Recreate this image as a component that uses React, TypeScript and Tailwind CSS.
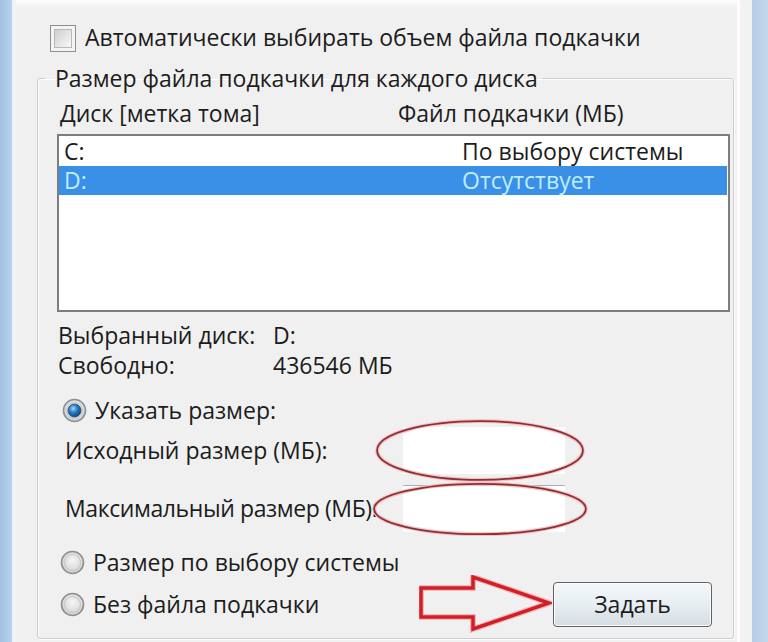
import React from 'react';

const font = "font-['Open_Sans',sans-serif] text-[23px] leading-none text-[#1c1c1c]";

const Radio: React.FC<{ checked?: boolean }> = ({ checked }) => (
    <svg width="25" height="25" viewBox="0 0 25 25" className="shrink-0">
        <defs>
            <radialGradient id="ring" cx="50%" cy="40%" r="60%">
                <stop offset="0%" stopColor="#f6f6f6" />
                <stop offset="100%" stopColor="#cfcfcf" />
            </radialGradient>
            <radialGradient id="dot" cx="40%" cy="35%" r="70%">
                <stop offset="0%" stopColor="#9fdcff" />
                <stop offset="45%" stopColor="#2a7cc4" />
                <stop offset="100%" stopColor="#0b3f73" />
            </radialGradient>
        </defs>
        <circle cx="12.5" cy="12.5" r="11" fill="url(#ring)" stroke="#8d8f91" strokeWidth="1.6" />
        <circle cx="12.5" cy="12.5" r="8" fill="none" stroke="#c4c5c6" strokeWidth="1" />
        {checked && <circle cx="12.5" cy="12.5" r="6.5" fill="url(#dot)" stroke="#1d4e7c" strokeWidth="0.8" />}
    </svg>
);

const Ellipse: React.FC<{ className: string }> = ({ className }) => (
    <svg className={`absolute pointer-events-none ${className}`} viewBox="0 0 200 60" preserveAspectRatio="none">
        <ellipse cx="100" cy="30" rx="98" ry="28" fill="none" stroke="#f3c3c3" strokeWidth="4" vectorEffect="non-scaling-stroke" />
        <ellipse cx="100" cy="30" rx="98" ry="28" fill="none" stroke="#8c2f35" strokeWidth="1.8" vectorEffect="non-scaling-stroke" />
    </svg>
);

export default function App() {
    return (
        <div className={`w-[768px] h-[642px] flex overflow-hidden bg-[#f0f0f0] ${font}`}>
            {/* window frame, left */}
            <div className="w-[12px] bg-gradient-to-r from-[#9fc0e4] to-[#b9d3ee]" />
            <div className="w-[4px] bg-[#eef4fa]" />

            <div className="flex-1 flex flex-col">
                <div className="h-[8px] bg-gradient-to-b from-[#fdfdfd] to-[#f1f1f1]" />

                {/* auto checkbox */}
                <div className="h-[44px] mt-[8px] flex items-center pl-[34px] gap-[9px]">
                    <div className="w-[26px] h-[27px] border-[1.5px] border-[#8e8f8f] bg-[#f4f4f4] p-[3px]">
                        <div className="w-full h-full border border-[#b5b8bc] bg-gradient-to-br from-[#cfcfcf] to-[#f8f8f8]" />
                    </div>
                    <span className="-mt-[2px]">Автоматически выбирать объем файла подкачки</span>
                </div>

                <fieldset className="ml-[21px] mr-[3px] mt-[3px] border border-[#c9cdd0] rounded-[3px] pl-[19px] pr-[3px] pb-[10px] shadow-[inset_1px_1px_0_#ffffff,1px_1px_0_#ffffff] flex flex-col">
                    <legend className="-ml-[12px] pl-[10px] pr-[4px] h-[30px] leading-[30px]">Размер файла подкачки для каждого диска</legend>

                    <div className="h-[41px] flex items-center">
                        <span className="w-[341px] pl-[3px]">Диск [метка тома]</span>
                        <span>Файл подкачки (МБ)</span>
                    </div>

                    <div className="h-[178px] border-2 border-[#7e7e7e] bg-white pt-[1px]">
                        <div className="h-[29px] flex items-center pl-[5px]">
                            <span className="w-[398px]">C:</span>
                            <span>По выбору системы</span>
                        </div>
                        <div className="h-[29px] flex items-center pl-[5px] mr-[1px] bg-[#3a8fe6] text-[#bdeeff]">
                            <span className="w-[398px]">D:</span>
                            <span>Отсутствует</span>
                        </div>
                    </div>

                    <div className="h-[30px] mt-[8px] flex items-center pl-[1px]">
                        <span className="w-[215px]">Выбранный диск:</span>
                        <span>D:</span>
                    </div>
                    <div className="h-[31px] flex items-center pl-[1px]">
                        <span className="w-[215px]">Свободно:</span>
                        <span>436546 МБ</span>
                    </div>

                    <div className="h-[30px] mt-[14px] flex items-center pl-[5px] gap-[8px]">
                        <Radio checked />
                        <span>Указать размер:</span>
                    </div>

                    <div className="h-[48px] mt-[1px] flex items-center pl-[8px]">
                        <span className="w-[338px] whitespace-nowrap">Исходный размер (МБ):</span>
                        <div className="relative w-[162px] h-[47px] bg-white">
                            <Ellipse className="-left-[28px] -top-[8px] w-[210px] h-[63px]" />
                        </div>
                    </div>

                    <div className="h-[48px] mt-[10px] flex items-center pl-[8px]">
                        <span className="w-[338px] whitespace-nowrap tracking-[-0.4px]">Максимальный размер (МБ):</span>
                        <div className="relative w-[162px] h-[47px] bg-white border-t border-[#a9acb2]">
                            <Ellipse className="-left-[31px] -top-[4px] w-[216px] h-[54px]" />
                        </div>
                    </div>

                    <div className="h-[30px] mt-[15px] flex items-center pl-[3px] gap-[8px]">
                        <Radio />
                        <span>Размер по выбору системы</span>
                    </div>

                    <div className="h-[48px] mt-[3px] flex items-center">
                        <div className="w-[362px] flex items-center pl-[3px] gap-[8px]">
                            <Radio />
                            <span>Без файла подкачки</span>
                        </div>
                        <svg width="133" height="58" viewBox="0 0 133 58" className="shrink-0">
                            <polygon points="2,13 54,13 54,2 130,28 54,54 54,42 2,42" fill="none" stroke="#f2b8bb" strokeWidth="6" strokeLinejoin="miter" />
                            <polygon points="2,13 54,13 54,2 130,28 54,54 54,42 2,42" fill="none" stroke="#d21f27" strokeWidth="3.5" strokeLinejoin="miter" />
                        </svg>
                        <button className="ml-[1px] w-[159px] h-[45px] rounded-[4px] border-[1.5px] border-[#5f6366] bg-gradient-to-b from-[#f4f7f9] via-[#e7eef2] to-[#d4dde2] shadow-[inset_0_0_0_1px_#f8fcff] text-[#1c1c1c]">
                            Задать
                        </button>
                    </div>
                </fieldset>
            </div>

            {/* window frame, right */}
            <div className="w-[3px] bg-white" />
            <div className="w-[12px] bg-gradient-to-r from-[#f5f2f4] to-[#eef3f1]" />
            <div className="w-[16px] bg-gradient-to-r from-[#b7cde6] to-[#c3d6ec]" />
        </div>
    );
}
